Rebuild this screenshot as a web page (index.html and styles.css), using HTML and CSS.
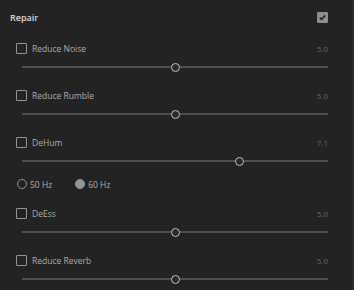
FILE: index.html
```html
<!DOCTYPE html>
<html lang="en">
<head>
    <meta charset="UTF-8">
    <title>Repair</title>
    <link rel="stylesheet" href="styles.css">
</head>
<body>

<div class="panel">
    <header class="panel-head">
        <span class="panel-title">Repair</span>
        <span class="check checked">
            <svg width="9" height="9" viewBox="0 0 9 9"><path d="M1.8 4.6 L3.6 6.4 L7.2 2.4" fill="none" stroke="#262626" stroke-width="1.6"/></svg>
        </span>
    </header>

    <div class="effects">
        <div class="effect">
            <div class="effect-top">
                <label><span class="check"></span>Reduce Noise</label>
                <span class="value">5.0</span>
            </div>
            <div class="slider"><span class="thumb" style="left:50%"></span></div>
        </div>

        <div class="effect">
            <div class="effect-top">
                <label><span class="check"></span>Reduce Rumble</label>
                <span class="value">5.0</span>
            </div>
            <div class="slider"><span class="thumb" style="left:50%"></span></div>
        </div>

        <div class="effect">
            <div class="effect-top">
                <label><span class="check"></span>DeHum</label>
                <span class="value">7.1</span>
            </div>
            <div class="slider"><span class="thumb" style="left:71%"></span></div>
        </div>

        <div class="radios">
            <label><span class="radio"></span>50 Hz</label>
            <label><span class="radio on"></span>60 Hz</label>
        </div>

        <div class="effect">
            <div class="effect-top">
                <label><span class="check"></span>DeEss</label>
                <span class="value">5.0</span>
            </div>
            <div class="slider"><span class="thumb" style="left:50%"></span></div>
        </div>

        <div class="effect">
            <div class="effect-top">
                <label><span class="check"></span>Reduce Reverb</label>
                <span class="value">5.0</span>
            </div>
            <div class="slider"><span class="thumb" style="left:50%"></span></div>
        </div>
    </div>
</div>

</body>
</html>
```

FILE: styles.css
```css
body {
    margin: 0;
    padding: 0;
    background: #232323;
    font-family: 'Open Sans', 'Noto Sans', sans-serif;
    color: #adadad;
}
.panel {
    width: 352px;
    height: 290px;
    border-right: 2px solid #2c2c2c;
    overflow: hidden;
}
.panel-head {
    display: flex;
    justify-content: space-between;
    align-items: center;
    height: 34px;
    padding: 0 24px 0 10px;
}
.panel-title {
    font-size: 9px;
    font-weight: 600;
    color: #d8d8d8;
}
.check {
    display: inline-flex;
    align-items: center;
    justify-content: center;
    box-sizing: border-box;
    width: 11px;
    height: 11px;
    border: 1.5px solid #959595;
    border-radius: 1px;
}
.check.checked {
    background: #8e8e8e;
    border-color: #8e8e8e;
}
.effects {
    display: flex;
    flex-direction: column;
    gap: 17px;
    padding-top: 7px;
}
.effect-top {
    display: flex;
    justify-content: space-between;
    align-items: center;
    height: 14px;
    padding: 0 24px 0 16px;
}
label {
    display: flex;
    align-items: center;
    gap: 5px;
    font-size: 8.5px;
}
.value {
    font-size: 8px;
    color: #666;
}
.slider {
    position: relative;
    height: 2px;
    margin: 11px 24px 3px 22px;
    background: #4e4e4e;
}
.thumb {
    position: absolute;
    top: -3.5px;
    width: 9px;
    height: 9px;
    margin-left: -4.5px;
    box-sizing: border-box;
    border: 1.5px solid #c0c0c0;
    border-radius: 50%;
    background: #2a2a2a;
}
.radios {
    display: flex;
    gap: 23px;
    height: 14px;
    margin: -5px 0 -2px;
    padding-left: 17px;
}
.radios label {
    gap: 3px;
}
.radio {
    box-sizing: border-box;
    width: 10px;
    height: 10px;
    border: 1.5px solid #959595;
    border-radius: 50%;
}
.radio.on {
    background: #959595;
}
```
